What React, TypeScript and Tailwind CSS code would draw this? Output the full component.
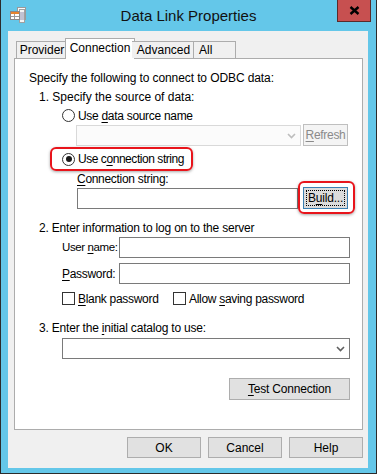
import React from "react";

const U = ({ children }: { children: React.ReactNode }) => (
  <span className="underline decoration-1 underline-offset-[2px]">{children}</span>
);

const Btn = ({ children, className = "" }: { children: React.ReactNode; className?: string }) => (
  <div
    className={
      "flex items-center justify-center border border-[#adadad] bg-[#e1e1e1] text-[12px] text-black " +
      className
    }
  >
    {children}
  </div>
);

const Radio = ({ checked = false }: { checked?: boolean }) => (
  <div className="flex h-[13px] w-[13px] shrink-0 items-center justify-center rounded-full border border-[#333] bg-white">
    {checked && <div className="h-[6px] w-[6px] rounded-full bg-[#1a1a1a]" />}
  </div>
);

const Check = () => <div className="h-[13px] w-[13px] shrink-0 border border-[#333] bg-white" />;

const Chevron = ({ color = "#606060" }: { color?: string }) => (
  <svg width="9" height="6" viewBox="0 0 9 6">
    <path d="M1 1l3.5 3.5L8 1" stroke={color} strokeWidth="1.6" fill="none" />
  </svg>
);

const WindowIcon = () => (
  <svg width="18" height="18" viewBox="0 0 18 18">
    <rect x="7.5" y="1.5" width="8" height="12" fill="#fafafa" stroke="#9a9a9a" />
    <path d="M10 5h4M10 7h4M10 9h4" stroke="#8a8aa8" />
    <rect x="9.5" y="3.5" width="5" height="13" fill="#f4f4f4" stroke="#a0a0a0" />
    <path d="M11 6v8M13 6v8" stroke="#9090b0" />
    <rect x="0.5" y="5.5" width="9" height="8" fill="#ffffff" stroke="#8a8a8a" />
    <rect x="1" y="6" width="8" height="2" fill="#e8852e" />
    <path d="M1 10.5h8M4.5 8v5" stroke="#9a9a9a" />
  </svg>
);

export default function App() {
  return (
    <div className="flex h-[474px] w-[377px] flex-col whitespace-nowrap border-x border-b border-[#2b2b2b] bg-[#64c7e9] font-['Liberation_Sans',Arial,sans-serif] text-[12px] text-black">
      {/* title bar */}
      <div className="grid h-[31px] grid-cols-[1fr_auto_1fr]">
        <div className="pl-[9px] pt-[6px]">
          <WindowIcon />
        </div>
        <div className="self-center pt-[1px] text-[15px] text-[#111]">Data Link Properties</div>
        <div className="mr-[5px] flex h-[22px] w-[34px] items-center justify-center self-start justify-self-end border-x border-b border-[#5a2a2a] bg-[#c75050]">
          <svg width="11" height="9" viewBox="0 0 11 9">
            <path d="M1.5 1l8 7M9.5 1l-8 7" stroke="#000" strokeWidth="2.4" />
          </svg>
        </div>
      </div>

      {/* client area */}
      <div className="ml-[7px] flex h-[437px] w-[360px] flex-col bg-[#f0f0f0] pl-[6px] pt-[7px]">
        {/* tabs */}
        <div className="relative z-10 flex h-[20px] items-end pl-[2px]">
          <div className="flex h-[17px] w-[52px] items-center justify-center border border-b-0 border-[#acacac] bg-[#f0f0f0]">
            Provider
          </div>
          <div className="-mb-[1px] ml-[-3px] flex h-[21px] w-[70px] items-center justify-center border border-b-0 border-[#acacac] bg-white pb-[2px]">
            Connection
          </div>
          <div className="ml-[-3px] flex h-[17px] w-[62px] items-center justify-center border border-b-0 border-l-0 border-[#acacac] bg-[#f0f0f0] pl-[2px]">
            Advanced
          </div>
          <div className="ml-[-1px] flex h-[17px] w-[43px] items-center border border-b-0 border-[#acacac] bg-[#f0f0f0] pl-[5px]">
            All
          </div>
        </div>

        {/* tab panel */}
        <div className="flex h-[372px] w-[349px] flex-col border border-[#acacac] bg-white">
          <div className="ml-[14px] mt-[11px] flex h-[15px] items-center tracking-[-0.1px]">
            Specify the following to connect to ODBC data:
          </div>
          <div className="ml-[24px] mt-[4px] flex h-[15px] items-center">1. Specify the source of data:</div>

          <div className="ml-[47px] mt-[4px] flex h-[15px] items-center gap-[3px]">
            <Radio />
            <span className="tracking-[-0.3px]">
              Use <U>d</U>ata source name
            </span>
          </div>

          <div className="ml-[61px] mt-[1px] flex h-[22px] items-end gap-[2px]">
            <div className="flex h-[21px] w-[225px] items-center justify-end border border-[#d9d9d9] bg-[#fbfbfb] pr-[4px]">
              <Chevron color="#bdbdbd" />
            </div>
            <div className="flex h-[22px] w-[45px] items-center justify-center border border-[#bfbfbf] bg-[#f4f4f4] text-[#8a8a8a]">
              <span className="tracking-[-0.3px]">
                <U>R</U>efresh
              </span>
            </div>
          </div>

          <div className="ml-[35px] mt-[1px] flex h-[24px] w-[143px] items-center gap-[3px] rounded-[6px] border-2 border-[#e8141b] pl-[10px] shadow-[0_1px_3px_rgba(0,0,0,0.35)]">
            <Radio checked />
            <span className="tracking-[-0.45px]">
              Use c<U>o</U>nnection string
            </span>
          </div>

          <div className="ml-[62px] flex h-[15px] items-center">
            <span className="tracking-[-0.3px]">
              <U>C</U>onnection string:
            </span>
          </div>

          <div className="ml-[62px] mt-[1px] flex h-[22px] items-end gap-[5px]">
            <div className="h-[21px] w-[221px] border border-[#7a7a7a] bg-white" />
            <div className="relative">
              <div className="absolute left-[-5px] top-[-6px] h-[33px] w-[57px] rounded-[6px] border-2 border-[#e8141b] shadow-[0_1px_3px_rgba(0,0,0,0.35)]" />
              <div className="flex h-[22px] w-[45px] items-center justify-center border border-[#3c7fb1] bg-[#dcdcdc] p-[2px]">
                <div className="flex h-full w-full items-center justify-center border border-dotted border-black">
                  <span className="tracking-[-0.2px]">
                    B<U>u</U>ild...
                  </span>
                </div>
              </div>
            </div>
          </div>

          <div className="ml-[24px] mt-[11px] flex h-[15px] items-center tracking-[-0.2px]">
            2. Enter information to log on to the server
          </div>

          <div className="ml-[47px] mt-[2px] flex h-[21px] items-center">
            <span className="w-[57px] text-[11.5px] tracking-[-0.4px]">
              User <U>n</U>ame:
            </span>
            <div className="h-[21px] w-[231px] border border-[#7a7a7a] bg-white" />
          </div>

          <div className="ml-[47px] mt-[5px] flex h-[21px] items-center">
            <span className="w-[57px] tracking-[-0.3px]">
              <U>P</U>assword:
            </span>
            <div className="h-[21px] w-[231px] border border-[#7a7a7a] bg-white" />
          </div>

          <div className="ml-[47px] mt-[8px] flex h-[13px] items-center">
            <div className="flex w-[111px] items-center gap-[3px]">
              <Check />
              <span className="tracking-[-0.3px]">
                <U>B</U>lank password
              </span>
            </div>
            <div className="flex items-center gap-[3px]">
              <Check />
              <span className="tracking-[-0.3px]">
                Allow <U>s</U>aving password
              </span>
            </div>
          </div>

          <div className="ml-[24px] mt-[15px] flex h-[15px] items-center">
            <span className="tracking-[-0.2px]">
              3. Enter the <U>i</U>nitial catalog to use:
            </span>
          </div>

          <div className="ml-[47px] mt-[3px] flex h-[21px] w-[288px] items-center justify-end border border-[#7a7a7a] bg-white pr-[4px]">
            <Chevron />
          </div>

          <div className="ml-[214px] mt-[19px]">
            <Btn className="h-[22px] w-[121px]">
              <span className="tracking-[-0.2px]">
                <U>T</U>est Connection
              </span>
            </Btn>
          </div>
        </div>

        {/* dialog buttons */}
        <div className="mt-[7px] flex w-[349px] justify-end gap-[7px]">
          <Btn className="h-[21px] w-[74px]">OK</Btn>
          <Btn className="h-[21px] w-[74px]">Cancel</Btn>
          <Btn className="h-[21px] w-[74px]">Help</Btn>
        </div>
      </div>
    </div>
  );
}
